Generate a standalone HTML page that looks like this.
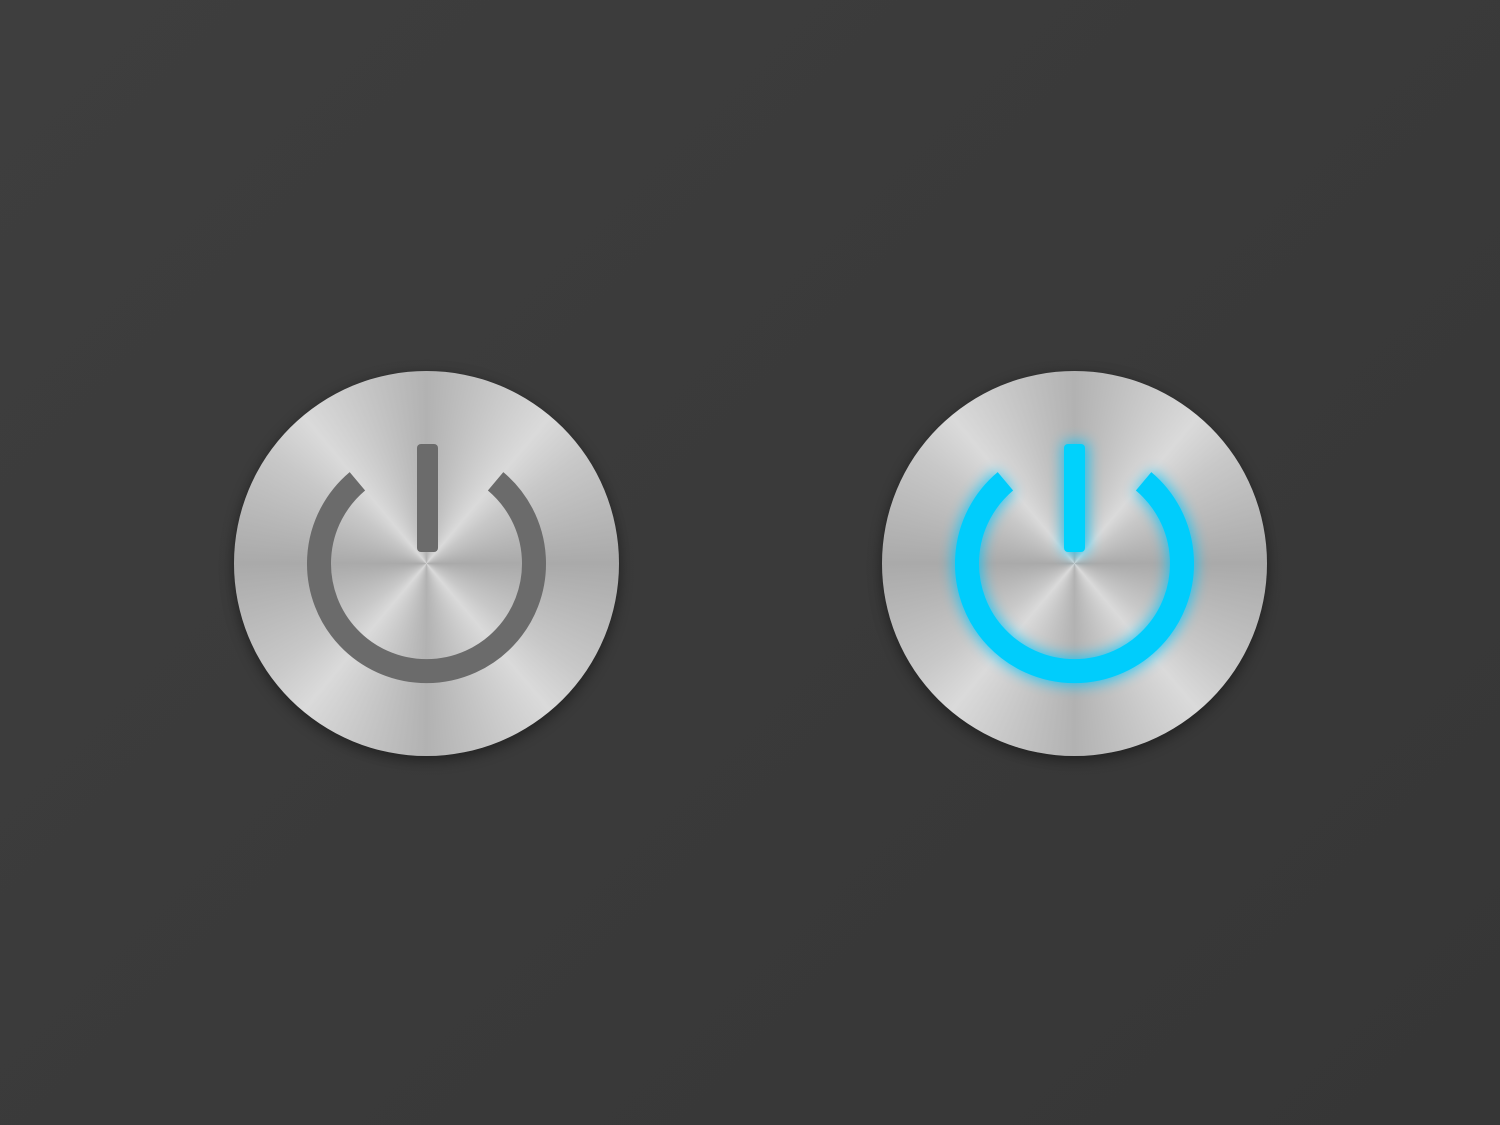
<!DOCTYPE html>
<html><head><meta charset="utf-8"><style>
html,body{margin:0;padding:0;width:1500px;height:1125px;overflow:hidden;background:linear-gradient(135deg,#3e3e3e,#363636);}
.btn{position:absolute;top:371px;width:385px;height:385px;border-radius:50%;
background:conic-gradient(from 0deg,#b2b2b2 0deg,#dadada 40deg,#c8c8c8 55deg,#aaaaaa 90deg,#c8c8c8 125deg,#dadada 140deg,#b2b2b2 180deg,#dadada 220deg,#c8c8c8 235deg,#aaaaaa 270deg,#c8c8c8 305deg,#dadada 320deg,#b2b2b2 360deg);
box-shadow:0 4px 14px rgba(0,0,0,0.45);}
svg{position:absolute;left:0;top:0}
</style></head><body>
<div class="btn" style="left:234px">
<svg width="385" height="385" viewBox="0 0 385 385">
<defs><filter id="in" x="-20%" y="-20%" width="140%" height="140%"><feGaussianBlur stdDeviation="1.5"/></filter></defs>
<g stroke="#6b6b6b" fill="none">
<path d="M123.4 110.3 A107.5 107.5 0 1 0 261.6 110.3" stroke-width="24"/>
</g>
<rect x="183" y="73" width="21" height="108" rx="4" fill="#6b6b6b"/>
</svg></div>
<div class="btn" style="left:882px">
<svg width="385" height="385" viewBox="0 0 385 385">
<defs><filter id="glow" x="-30%" y="-30%" width="160%" height="160%"><feGaussianBlur stdDeviation="7"/></filter></defs>
<g filter="url(#glow)" opacity="0.8">
<path d="M123.4 110.3 A107.5 107.5 0 1 0 261.6 110.3" stroke="#00c8ff" stroke-width="28" fill="none"/>
<rect x="181" y="71" width="25" height="112" rx="5" fill="#00c8ff"/>
</g>
<path d="M123.4 110.3 A107.5 107.5 0 1 0 261.6 110.3" stroke="#00cdfc" stroke-width="24" fill="none"/>
<rect x="182" y="73" width="21" height="108" rx="4" fill="#00d2fc"/>
</svg></div>
</body></html>
